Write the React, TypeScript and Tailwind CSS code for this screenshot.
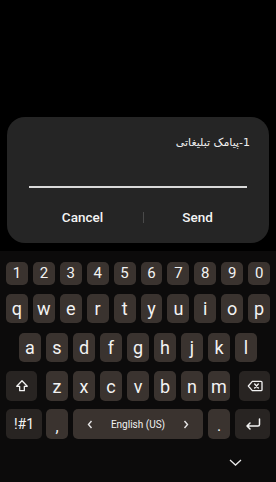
import React from "react";

const keyBase =
  "flex items-center justify-center rounded-[5px] text-[#f2f2f2]";
const normal = "bg-[#3a332f]";
const special = "bg-[#282422]";

function Key({
  children,
  className = "",
}: {
  children: React.ReactNode;
  className?: string;
}) {
  return <div className={`${keyBase} ${className}`}>{children}</div>;
}

export default function App() {
  const nums = ["1", "2", "3", "4", "5", "6", "7", "8", "9", "0"];
  const row1 = ["q", "w", "e", "r", "t", "y", "u", "i", "o", "p"];
  const row2 = ["a", "s", "d", "f", "g", "h", "j", "k", "l"];
  const row3 = ["z", "x", "c", "v", "b", "n", "m"];
  return (
    <div
      className="w-[276px] h-[482px] bg-black flex flex-col overflow-hidden"
      style={{ fontFamily: "Roboto, 'DejaVu Sans', sans-serif" }}
    >
      {/* Dialog */}
      <div className="mt-[117px] mx-[7px] h-[126px] rounded-[18px] bg-[#252525] flex flex-col">
        <div
          className="pt-[18px] pr-[19px] h-[34px] text-right text-[11px] leading-[16px] text-[#f0f0f0]"
          dir="rtl"
          style={{ fontFamily: "'DejaVu Sans', 'Noto Sans', sans-serif" }}
        >
          1-پیامک تبلیغاتی
        </div>
        <div className="mt-[35px] mx-[22px] h-[1.5px] bg-[#d9d9d9]" />
        <div className="mt-[17px] h-[25px] flex items-center ml-[15px] mr-[18px]">
          <div className="w-[121px] text-center text-[13.5px] font-medium text-[#f4f4f4]">
            Cancel
          </div>
          <div className="w-px h-[11px] bg-[#4a4a4a]" />
          <div className="flex-1 text-center text-[13.5px] font-medium text-[#f4f4f4]">
            Send
          </div>
        </div>
      </div>

      {/* Keyboard */}
      <div className="mt-[8px] flex-1 bg-[#0c0b0b] flex flex-col pt-[11px]">
        <div className="flex px-[6px] gap-[5px] h-[23px]">
          {nums.map((n) => (
            <Key key={n} className={`${normal} flex-1 text-[15px]`}>
              {n}
            </Key>
          ))}
        </div>
        <div className="mt-[9px] flex px-[6px] gap-[5px] h-[29px]">
          {row1.map((n) => (
            <Key key={n} className={`${normal} flex-1 text-[18px]`}>
              {n}
            </Key>
          ))}
        </div>
        <div className="mt-[10px] flex px-[19px] gap-[5px] h-[29px]">
          {row2.map((n) => (
            <Key key={n} className={`${normal} flex-1 text-[18px]`}>
              {n}
            </Key>
          ))}
        </div>
        <div className="mt-[9px] flex px-[6px] h-[30px]">
          <Key className={`${special} w-[31px]`}>
            <svg width="14" height="14" viewBox="0 0 24 24" fill="none">
              <path
                d="M12 3 L3 12.5 H8 V20 H16 V12.5 H21 Z"
                stroke="#f2f2f2"
                strokeWidth="2.2"
                strokeLinejoin="round"
              />
            </svg>
          </Key>
          <div className="flex-1 flex px-[9px] gap-[5px]">
            {row3.map((n) => (
              <Key key={n} className={`${normal} flex-1 text-[18px]`}>
                {n}
              </Key>
            ))}
          </div>
          <Key className={`${special} w-[31px]`}>
            <svg width="16" height="12" viewBox="0 0 24 18" fill="none">
              <path
                d="M8 2 H21 a1.5 1.5 0 0 1 1.5 1.5 V14.5 a1.5 1.5 0 0 1 -1.5 1.5 H8 L2 9 Z"
                stroke="#f2f2f2"
                strokeWidth="2"
                strokeLinejoin="round"
              />
              <path
                d="M11.5 6 L17 12 M17 6 L11.5 12"
                stroke="#f2f2f2"
                strokeWidth="2"
                strokeLinecap="round"
              />
            </svg>
          </Key>
        </div>
        <div className="mt-[8px] flex px-[6px] h-[30px]">
          <Key className={`${special} w-[36px] text-[14px]`}>!#1</Key>
          <div className="flex-1 flex pl-[4px] gap-[5px]">
            <Key className={`${normal} w-[22px] text-[16px] items-end pb-[4px]`}>
              <span className="leading-none">,</span>
            </Key>
            <Key className={`${normal} flex-1 text-[10px] text-[#e6e6e6]`}>
              <svg width="6" height="9" viewBox="0 0 6 9" className="mr-[18px]">
                <path d="M4.5 1 L1.5 4.5 L4.5 8" stroke="#e6e6e6" strokeWidth="1.4" fill="none" />
              </svg>
              <span>English (US)</span>
              <svg width="6" height="9" viewBox="0 0 6 9" className="ml-[18px]">
                <path d="M1.5 1 L4.5 4.5 L1.5 8" stroke="#e6e6e6" strokeWidth="1.4" fill="none" />
              </svg>
            </Key>
            <Key className={`${normal} w-[22px] text-[16px] items-end pb-[5px]`}>
              <span className="leading-none">.</span>
            </Key>
            <Key className={`${special} w-[35px]`}>
              <svg width="16" height="12" viewBox="0 0 16 12" fill="none">
                <path
                  d="M14.5 1 V6.5 a1.5 1.5 0 0 1 -1.5 1.5 H2 M5 5 L2 8 L5 11"
                  stroke="#f2f2f2"
                  strokeWidth="1.5"
                  strokeLinecap="round"
                  strokeLinejoin="round"
                />
              </svg>
            </Key>
          </div>
        </div>
        <div className="mt-[20px] flex justify-end pr-[34px]">
          <svg width="13" height="7" viewBox="0 0 13 7" fill="none">
            <path d="M1 1 L6.5 6 L12 1" stroke="#e8e8e8" strokeWidth="1.3" />
          </svg>
        </div>
      </div>
    </div>
  );
}
